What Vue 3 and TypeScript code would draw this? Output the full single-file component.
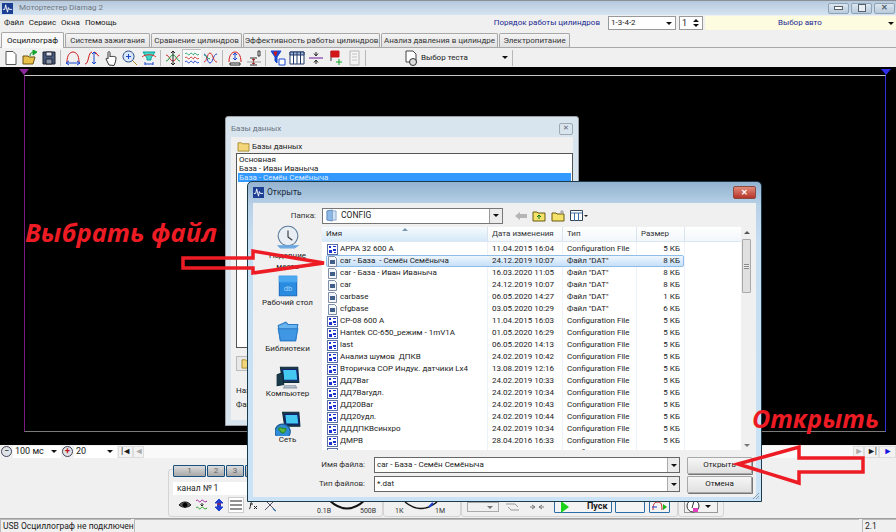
<template>
  <div class="app">
    <header class="titlebar">
      <svg class="app-ico" viewBox="0 0 12 12"><rect width="12" height="12" fill="#1c3f94" /><path d="M1 7h2l1-5 2 8 1-5 1 2h3" fill="none" stroke="#fff" /></svg>
      <span class="title-text">Мотортестер Diamag 2</span>
      <div class="winbtns">
        <span class="winbtn"><i class="w-min"></i></span>
        <span class="winbtn"><i class="w-max"></i></span>
        <span class="winbtn"><b>✕</b></span>
      </div>
    </header>

    <div class="menubar">
      <span v-for="m in menus" :key="m">{{ m }}</span>
      <span class="cyl-label">Порядок работы цилиндров</span>
      <div class="combo cyl-combo"><span>1-3-4-2</span><i class="arr"></i></div>
      <div class="combo spin"><span>1</span><em><i class="up"></i><i class="arr"></i></em></div>
      <div class="auto"><span>Выбор авто</span><i class="arr"></i></div>
    </div>

    <div class="tabs">
      <div v-for="(t, i) in tabs" :key="t.name" class="tab" :class="{ active: i === 0 }" :style="{ width: t.w + 'px' }">{{ t.name }}</div>
    </div>

    <div class="toolbar">
      <template v-for="(g, gi) in toolGroups" :key="gi">
        <span v-for="(ic, i) in g" :key="i" class="tool" :class="{ pressed: ic.on }">
          <svg viewBox="0 0 16 16" width="16" height="16">
            <path v-for="(p, k) in ic.p" :key="k" :d="p[0]" :stroke="p[1]" :fill="p[2] || 'none'" />
          </svg>
        </span>
        <i class="sep"></i>
      </template>
      <div class="test-select">
        <svg viewBox="0 0 16 16" width="16" height="16"><path d="M3 1h7l3 3v8H3z" fill="#fff" stroke="#444" /><circle cx="10" cy="12" r="3.500" fill="#ddd" stroke="#333" /></svg>
        <span>Выбор теста</span>
        <i class="arr"></i>
      </div>
      <i class="sep"></i>
    </div>

    <div class="scope">
      <div class="plot">
        <i class="mark mark-l"></i>
        <i class="mark mark-r"></i>
      </div>
    </div>

    <div class="timebar">
      <span class="round">−</span>
      <div class="sel w48"><span>100 мс</span><i class="arr"></i></div>
      <span class="round red">+</span>
      <div class="sel w42"><span>20</span><i class="arr"></i></div>
      <span class="nav">|◄</span>
      <span class="nav off">◄</span>
      <div class="track"></div>
      <span class="nav off">►</span>
      <span class="nav">►|</span>
      <span class="nav blue">►</span>
    </div>

    <div class="panel">
      <div class="group ch-group">
        <div class="ch-col">
          <div class="ch-tabs">
            <span class="ch-tab first">1</span><span class="ch-tab">2</span><span class="ch-tab">3</span><span class="ch-tab">4</span>
          </div>
          <div class="ch-input">канал № 1</div>
          <div class="ch-icons">
            <svg v-for="(ic, i) in chIcons" :key="i" viewBox="0 0 14 14" width="14" height="14" :class="{ boxed: i === 3 }">
              <path v-for="(p, k) in ic" :key="k" :d="p[0]" :stroke="p[1]" :fill="p[2] || 'none'" />
            </svg>
          </div>
        </div>
        <svg class="dial d-volt" viewBox="0 0 62 16" width="62" height="16">
          <path d="M12 1Q30 18 48 1" fill="none" stroke="#111" stroke-width="2" />
          <text x="0" y="14">0.1В</text><text x="43" y="14">500В</text>
        </svg>
      </div>
      <div class="group dial-group">
        <svg class="dial" viewBox="0 0 58 16" width="58" height="16">
          <path d="M12 3Q28 16 44 3" fill="none" stroke="#111" stroke-width="1.500" />
          <path d="M36 8l4-4" stroke="#1a3fd0" stroke-width="2" />
          <text x="2" y="14">1К</text><text x="42" y="14">1М</text>
        </svg>
      </div>
      <div class="group ctl-group">
        <div class="mini-combo"><i class="arr gray"></i></div>
        <svg viewBox="0 0 16 12" width="16" height="12" class="ctl-ico"><path d="M1 3h9l3 3M14 9H6L3 6" fill="none" stroke="#999" /></svg>
        <svg viewBox="0 0 16 12" width="16" height="12" class="ctl-ico"><path d="M1 6h5M3 4l3 2-3 2M15 6h-5M13 4l-3 2 3 2" fill="none" stroke="#777" /></svg>
        <div class="btn-blue start">
          <svg viewBox="0 0 10 12" width="10" height="12"><path d="M1 0l8 6-8 6z" fill="#19d219" /></svg>
          <b>Пуск</b>
        </div>
        <div class="btn-blue blank"></div>
        <div class="btn-blue small">
          <svg viewBox="0 0 18 12" width="18" height="12"><path d="M3 9C3 2 5 1 8 1s4 2 4 8" fill="none" stroke="#c22" /><path d="M2 6h5" stroke="#1a3fd0" /><path d="M13 3l4 3-4 3z" fill="#19b219" /></svg>
        </div>
      </div>
      <div class="group last-group">
        <div class="btn-gray">
          <svg viewBox="0 0 16 13" width="16" height="13"><circle cx="7" cy="6" r="6" fill="#fff" stroke="#333" /><path d="M8 1L6 8" stroke="#333" /><path d="M7 8h5v4H7z" fill="#e040c0" /></svg>
          <i class="arr"></i>
        </div>
      </div>
    </div>

    <footer class="status">
      <div class="st st-a">USB Осциллограф не подключен</div>
      <div class="st st-b"></div>
      <div class="st st-c">2.1</div>
    </footer>

    <!-- base list window, behind the file dialog -->
    <section class="win-db">
      <div class="db-title"><span>Базы данных</span><i class="db-close">✕</i></div>
      <div class="db-body">
        <div class="db-head">
          <svg viewBox="0 0 14 12" width="13" height="11"><path d="M1 2h4l1 1h7v8H1z" fill="#f3d67a" stroke="#a88a30" /></svg>
          <span>Базы данных</span>
        </div>
        <div class="db-list">
          <div>Основная</div>
          <div>База - Иван Иваныча</div>
          <div class="sel-row">База - Семён Семёныча</div>
        </div>
        <div class="db-btn"><svg viewBox="0 0 14 12" width="13" height="11"><path d="M1 2h4l1 1h7v8H1z" fill="#f3d67a" stroke="#a88a30" /></svg></div>
        <div class="db-note first">Название</div>
        <div class="db-note">Файл</div>
      </div>
    </section>

    <!-- file open dialog -->
    <section class="win-open">
      <div class="open-title">
        <svg viewBox="0 0 12 12" width="11" height="11"><rect width="12" height="12" fill="#1c3f94" /><path d="M1 7h2l1-5 2 8 1-5 1 2h3" fill="none" stroke="#fff" /></svg>
        <span>Открыть</span>
        <i class="open-close">✕</i>
      </div>
      <div class="open-body">
        <div class="folder-row">
          <label>Папка:</label>
          <div class="folder-combo">
            <svg viewBox="0 0 12 14" width="11" height="13"><path d="M1 2l6-1v12l-6-1z" fill="#8db8e8" stroke="#5b86b8" /><path d="M7 2h4v10H7z" fill="#cfe2f5" stroke="#8aa8c8" /></svg>
            <span>CONFIG</span>
            <em><i class="arr"></i></em>
          </div>
          <div class="nav-icons">
            <svg viewBox="0 0 12 10" width="12" height="10"><path d="M0 5l5-4v2h7v4H5v2z" fill="#b5b5b5" /></svg>
            <svg viewBox="0 0 14 12" width="14" height="12"><path d="M1 2h4l1 1h7v8H1z" fill="#f4e26a" stroke="#6b5a10" /><path d="M7 9V5M5 7l2-2 2 2" stroke="#0a7a20" fill="none" /></svg>
            <svg viewBox="0 0 14 12" width="14" height="12"><path d="M1 3h4l1 1h7v7H1z" fill="#f4e26a" stroke="#6b5a10" /><path d="M11 0v4M9 2h4" stroke="#999" /></svg>
            <svg viewBox="0 0 18 12" width="18" height="12"><path d="M.5.5h12v10H.5z" fill="#fff" stroke="#345" /><path d="M.5 3h12M4.500 3v8M8.500 3v8" stroke="#3a6ea8" /><path d="M14 5h4l-2 2z" fill="#222" /></svg>
          </div>
        </div>

        <div class="main">
          <aside class="places">
            <div v-for="pl in places" :key="pl.name" class="place" :class="pl.cls">
              <svg viewBox="0 0 24 24" width="26" height="26">
                <path v-for="(p, k) in pl.p" :key="k" :d="p[0]" :stroke="p[1]" :fill="p[2] || 'none'" />
                <text v-if="pl.txt" x="8" y="17">{{ pl.txt }}</text>
              </svg>
              <span>{{ pl.name }}</span>
            </div>
          </aside>

          <div class="list">
            <div class="list-cols">
              <div class="head">
                <span class="h-name">Имя<i class="sort"></i></span>
                <span class="h-date">Дата изменения</span>
                <span class="h-type">Тип</span>
                <span class="h-size">Размер</span>
              </div>
              <div class="rows">
                <div v-for="(f, i) in files" :key="i" class="row" :class="{ picked: i === 1 }">
                  <span class="r-name">
                    <svg v-if="f.dat" viewBox="0 0 11 11" width="11" height="11"><path d="M1.500.5h6l2 2v8h-8z" fill="#f2f5fa" stroke="#7f8ea3" /><path d="M3 4h5v4H3z" fill="#3f5f88" /></svg>
                    <svg v-else viewBox="0 0 11 11" width="11" height="11"><rect x=".5" y=".5" width="10" height="10" fill="#fff" stroke="#5a6fa8" /><path d="M2 2h2v2H2zM6 2h3v1H6zM2 6h3v3H2zM6 5h3v2H6zM7 8h2v1H7z" fill="#1c2fd0" /></svg>
                    <span>{{ f.name }}</span>
                  </span>
                  <span class="r-date">{{ f.date }}</span>
                  <span class="r-type">{{ f.dat ? 'Файл "DAT"' : 'Configuration File' }}</span>
                  <span class="r-size">{{ f.size }} КБ</span>
                </div>
              </div>
            </div>
            <div class="vscroll">
              <i class="arr up-g"></i>
              <div class="thumb"><i></i></div>
              <i class="arr gray"></i>
            </div>
          </div>
        </div>

        <div class="open-foot">
          <label>Имя файла:</label>
          <div class="field"><span>car - База  - Семён Семёныча</span><em><i class="arr"></i></em></div>
          <div class="push default">Открыть</div>
          <label>Тип файлов:</label>
          <div class="field"><span>*.dat</span><em><i class="arr"></i></em></div>
          <div class="push">Отмена</div>
        </div>
      </div>
      <svg class="grip" viewBox="0 0 8 8" width="8" height="8"><path d="M7 1L1 7M7 4L4 7M7 6.500L6.500 7" stroke="#8a9aa8" fill="none" /></svg>
    </section>

    <!-- red annotations drawn on top of the screenshot -->
    <svg class="arrows" viewBox="0 0 896 532" width="896" height="532">
      <path d="M183 258H253V251L324 263 253 273V268H183Z" />
      <path d="M738 464L799 447V458H863V472H799V483Z" />
    </svg>
    <div class="note note-file">Выбрать файл</div>
    <div class="note note-open">Открыть</div>
  </div>
</template>

<script setup lang="ts">
type Shape = [string, string, string?]
interface ToolIcon { p: Shape[]; on?: boolean }

const menus = ['Файл', 'Сервис', 'Окна', 'Помощь']

const tabs = [
  { name: 'Осциллограф', w: 63 },
  { name: 'Система зажигания', w: 85 },
  { name: 'Сравнение цилиндров', w: 91 },
  { name: 'Эффективность работы цилиндров', w: 137 },
  { name: 'Анализ давления в цилиндре', w: 117 },
  { name: 'Электропитание', w: 71 }
]

const toolGroups: ToolIcon[][] = [
  [
    { p: [['M3 1.500h7l3 3v10H3z', '#555', '#fff']] },
    { p: [['M1 6h5l1 1h6l-2 7H1z', '#6b5210', '#e9c04a'], ['M8 6c0-3 2-4 4-4', '#0a8a20'], ['M11 0l4 2-4 3z', '#12a52a', '#12a52a']] },
    { p: [['M2 2h12v12H2z', '#223', '#47597a'], ['M5 2h6v4H5z', '#223', '#dfe5ee'], ['M5 9h6v5H5z', '#223', '#8d99ad']] }
  ],
  [
    { p: [['M2 12C2 5 5 2 8 2s6 3 6 10', '#d01818'], ['M1 13h14M1 13l3-2M1 13l3 2M15 13l-3-2M15 13l-3 2', '#1848d0']] },
    { p: [['M1 14C5 14 4 2 8 2', '#d01818'], ['M10 2c3 0 3 4 5 4', '#d01818'], ['M10 2v12M8 4l2-2 2 2M8 12l2 2 2-2', '#1848d0']] },
    { p: [['M6 15L3 9c0-1 1-1 2 0V3c0-2 2-2 2 0v4c0-1 2-1 2 0 0-1 2-1 2 0 0-.5 2-.5 2 .5 0 3-1 6-2 8z', '#333', '#fff']] },
    { p: [['M10 10l5 5', '#b08a20'], ['M6.500 1a5.500 5.500 0 1 0 .01 0z', '#2a4a80', '#d8e6f8'], ['M4 6.500h5M6.500 4v5', '#1848d0']] },
    { p: [['M2 2h12l-4 6v2H6V8z', '#08a0a0', '#40d8c8'], ['M1 7c3-3 11-3 14 0', '#e03030'], ['M4 14h8M4 12v3M12 12v3', '#1848d0']] }
  ],
  [
    { p: [['M1 5c3 0 4 6 7 6s4-6 7-6', '#d03030'], ['M1 11c3 0 4-6 7-6s4 6 7 6', '#20a040'], ['M8 1v14M6 3l2-2 2 2M6 13l2 2 2-2', '#222']] },
    { on: true, p: [['M1 4c2-3 3 3 5 0s3 3 4 0 3 3 5 0', '#20a060'], ['M1 8c2-3 3 3 5 0s3 3 4 0 3 3 5 0', '#d03030'], ['M1 12c2-3 3 3 5 0s3 3 4 0 3 3 5 0', '#2040d0']] },
    { p: [['M1 4c3 0 3 9 6 9s3-9 7-9', '#2040d0'], ['M1 12c3 0 3-9 6-9s3 9 7 9', '#d03030'], ['M1 5c3 0 3 4 6 4', '#20a060']] }
  ],
  [
    { p: [['M2 12C2 5 5 2 8 2s6 3 6 10', '#d01818'], ['M8 3v7M6 5l2-2 2 2M6 8l2 2 2-2', '#1848d0'], ['M3 13h10v2H3z', '#222', '#fff']] },
    { p: [['M4 8h7M4 15h7', '#333'], ['M7.500 9v5M6 10l1.500-1 1.500 1M6 13l1.500 1 1.500-1', '#a02020'], ['M12 1h2v5h-2z', '#333'], ['M1 12h14', '#999']] }
  ],
  [
    { p: [['M1 1h10L7 7v6L5 11V7z', '#1848d0', '#1848d0'], ['M4 2h3L5.500 6z', '#d01818', '#d01818'], ['M9 9h6v6H9z', '#1848d0', '#fff']] },
    { p: [['M1 2h14v12H1z', '#223a6a', '#fff'], ['M1 2h14v3H1z', '#223a6a', '#9db2d4'], ['M4.500 2v12M8 2v12M11.500 2v12', '#223a6a']] },
    { p: [['M1 8h14', '#6a1a9a'], ['M8 2v3M6 3.500L8 6l2-2.500M8 14v-3M6 12.500L8 10l2 2.500', '#222']] },
    { p: [['M4 1v10', '#333'], ['M4 1h8v6H4z', '#d01818', '#d01818'], ['M9 12h6M12 9v6', '#12a52a']] },
    { p: [['M4 1h9v14H4z', '#b5b5b5', '#f4f4f4'], ['M6 4h5M6 7h5M6 10h5', '#c4c4c4']] }
  ]
]

const chIcons: Shape[][] = [
  [['M1 7c3-4 9-4 12 0-3 3-9 3-12 0z', '#222', '#555'], ['M7 5a2 2 0 1 0 .01 0z', '#000', '#000']],
  [['M1 3c2-3 3 3 5 0s3 3 6 0', '#a020a0'], ['M1 10c2-3 3 3 5 0s3 3 6 0', '#20a020'], ['M7 5v3M5.500 6.500L7 8l1.500-1.500', '#222']],
  [['M7 1L3 5h2.500v4H3l4 4 4-4H8.500V5H11z', '#2040d0', '#2040d0'], ['M5 6h4', '#d01818']],
  [['M1 3h12M1 7h12', '#222'], ['M1 11h12', '#222']],
  [['M3 11c2 0 1-8 4-8M4 6h3M8 8l3 3M11 8l-3 3', '#222']],
  [['M2 2l10 10M12 2L2 12', '#556', ''], ['M1 1l3 1-2 2zM10 10l3 3-2-1z', '#3a6ea8', '#3a6ea8']]
]

const places = [
  { name: 'Недавние места', cls: 'pl-recent', txt: '', p: [
    ['M12 2a9 9 0 1 0 .01 0z', '#5a7a9a', '#e8eef4'], ['M12 6v6l4 3', '#333'], ['M3 20h18l-3 2H5z', '#6ba6e0', '#6ba6e0']
  ] as Shape[] },
  { name: 'Рабочий стол', cls: 'pl-desk', txt: 'db', p: [
    ['M4 3h16v18H4z', '#1a6cc0', '#2a8ce0'], ['M4 3h16v5H4z', '#4aa8f0', '#4aa8f0']
  ] as Shape[] },
  { name: 'Библиотеки', cls: 'pl-lib', txt: '', p: [
    ['M3 6l7-3 2 2h9l-2 15H5z', '#2a7ac8', '#69b4ee'], ['M3 9h18l-2 11H5z', '#2a7ac8', '#3f97e4']
  ] as Shape[] },
  { name: 'Компьютер', cls: 'pl-comp', txt: '', p: [
    ['M5 3h16l1 14H7z', '#0c2a3a', '#1a3a4a'], ['M7 5h13l1 10H8z', '#127', '#45c8f0'], ['M2 10l5-2 1 11-6 1z', '#0c2a3a', '#1a3a4a'], ['M9 20h10l1 2H8z', '#8a98a8', '#c8d0d8']
  ] as Shape[] },
  { name: 'Сеть', cls: 'pl-net', txt: '', p: [
    ['M7 2h15l1 13H9z', '#0c2a3a', '#1a3a4a'], ['M9 4h12l1 9H10z', '#127', '#45c8f0'], ['M7 13a7 7 0 1 0 .01 0z', '#1a5a90', '#2f8ad8'], ['M3 17c3-2 4 1 6 0s1 3-1 4-3-1-5-4z', '#2a8a30', '#58b840']
  ] as Shape[] }
]

const cfg = (name: string, date: string, size = 5) => ({ name, date, size, dat: false })
const dat = (name: string, date: string, size: number) => ({ name, date, size, dat: true })

const files = [
  cfg('APPA 32 600 A', '11.04.2015 16:04'),
  dat('car - База  - Семён Семёныча', '24.12.2019 10:07', 8),
  dat('car - База - Иван Иваныча', '16.03.2020 11:05', 8),
  dat('car', '24.12.2019 10:07', 8),
  dat('carbase', '06.05.2020 14:27', 1),
  dat('cfgbase', '03.05.2020 10:29', 6),
  cfg('CP-08 600 A', '11.04.2015 16:03'),
  cfg('Hantek CC-650_режим - 1mV1A', '01.05.2020 16:29'),
  cfg('last', '06.05.2020 14:13'),
  cfg('Анализ шумов  ДПКВ', '24.02.2019 10:42'),
  cfg('Вторичка СОР Индук. датчики Lx4', '13.08.2019 12:16'),
  cfg('ДД7Bar', '24.02.2019 10:33'),
  cfg('ДД7Barудл.', '24.02.2019 10:34'),
  cfg('ДД20Bar', '24.02.2019 10:43'),
  cfg('ДД20удл.', '24.02.2019 10:44'),
  cfg('ДДДПКВсинхро', '24.02.2019 10:34'),
  cfg('ДМРВ', '28.04.2016 16:33'),
  cfg('ДМРВ2', '18.04.2016 15:18')
]
</script>

<style>
html, body { margin: 0; padding: 0; background: #f0f0f0; }
</style>

<style scoped>
.app {
  position: relative;
  width: 896px;
  height: 532px;
  overflow: hidden;
  display: flex;
  flex-direction: column;
  background: #f0f0f0;
  color: #1a1a1a;
  font: 8px/1 Roboto, "Liberation Sans", Arial, sans-serif;
}
i, em, b { font-style: normal; }
svg { display: block; flex: none; }

/* common little dropdown arrow */
.arr { display: block; width: 0; height: 0; border: 3px solid transparent; border-top: 3px solid #111; border-bottom: 0; }
.arr.gray { border-top-color: #777; }
.up { display: block; width: 0; height: 0; border: 3px solid transparent; border-bottom: 3px solid #111; border-top: 0; }

.titlebar { flex: none; height: 15px; box-sizing: border-box; display: flex; align-items: center; padding-left: 2px; border-top: 1px solid #8a8f96; background: linear-gradient(#b6c9dc, #d5e4f1); }
.app-ico { width: 11px; height: 11px; }
.title-text { margin-left: 6px; font-size: 8px; color: #6f7680; }
.winbtns { margin-left: auto; margin-right: 1px; display: flex; gap: 2px; }
.winbtn { width: 21px; height: 11px; box-sizing: border-box; border: 1px solid #8fa3b6; border-radius: 2px; background: linear-gradient(#dbe6f0, #b9cbdc); display: flex; align-items: center; justify-content: center; color: #55626e; font-size: 8px; }
.w-min { width: 7px; height: 2px; border: 1px solid #55626e; background: #fff; }
.w-max { width: 6px; height: 6px; border: 1px solid #55626e; background: #e8eef4; }

.menubar { flex: none; height: 16px; display: flex; align-items: center; padding-left: 4px; gap: 5px; white-space: nowrap; }
.cyl-label { margin-left: auto; margin-right: 3px; color: #1a2a90; }
.combo { height: 14px; box-sizing: border-box; border: 1px solid #999; background: #fff; display: flex; align-items: center; padding: 0 3px 0 2px; justify-content: space-between; }
.cyl-combo { width: 68px; margin-right: -2px; }
.spin { width: 24px; margin-right: -3px; font-size: 9px; }
.spin em { display: flex; flex-direction: column; gap: 2px; }
.auto { width: 191px; height: 14px; box-sizing: border-box; background: #fdfbe0; border-radius: 2px; display: flex; align-items: center; padding-left: 73px; justify-content: space-between; padding-right: 2px; color: #1a2a90; }

.tabs { flex: none; height: 16px; box-sizing: border-box; display: flex; gap: 1px; align-items: flex-end; padding: 0 0 0 1px; border-bottom: 1px solid #a8a8a8; margin-top: 1px; }
.tab { height: 14px; box-sizing: border-box; border: 1px solid #a8a8a8; border-bottom: 0; border-radius: 2px 2px 0 0; background: linear-gradient(#f4f4f4, #e2e2e2); display: flex; align-items: center; justify-content: center; white-space: nowrap; color: #333; }
.tab.active { height: 16px; background: #f8f8f8; position: relative; margin-bottom: -1px; color: #111; }

.toolbar { flex: none; height: 19px; display: flex; align-items: center; padding-left: 1px; background: #f0f0f0; }
.tool { width: 19px; height: 18px; display: flex; align-items: center; justify-content: center; flex: none; }
.tool.pressed { background: #fafafa; box-shadow: inset 1px 1px 0 #c0c0c0, inset -1px -1px 0 #fff; }
.sep { width: 1px; height: 16px; background: #b8b8b8; margin: 0 2px; flex: none; }
.test-select { width: 142px; box-sizing: border-box; display: flex; align-items: center; padding: 0 2px 0 35px; gap: 2px; white-space: nowrap; flex: none; }
.test-select .arr { margin-left: auto; }

.scope { flex: 1; min-height: 0; background: #000; padding: 8px 10px 13px 24px; display: flex; box-sizing: border-box; }
.plot { flex: 1; position: relative; box-sizing: border-box; border-top: 1px solid #c8c8c8; border-bottom: 1px solid #7a7a7a; border-left: 1px solid #7a1a80; border-right: 1px solid #3030d8; }
.mark { position: absolute; top: -7px; width: 0; height: 0; border: 5px solid transparent; border-bottom: 0; border-top-width: 6px; }
.mark-l { left: -6px; border-top-color: #8a2a9a; }
.mark-r { right: -6px; border-top-color: #3030e8; }

.timebar { flex: none; height: 13px; display: flex; align-items: center; padding: 0 0 0 1px; gap: 0; }
.round { width: 11px; height: 11px; box-sizing: border-box; border: 1px solid #445; border-radius: 50%; display: flex; align-items: center; justify-content: center; font-size: 9px; background: #dfe3ea; margin-right: 1px; }
.round.red { color: #c01818; font-weight: bold; margin-left: 1px; }
.sel { background: #fff; height: 12px; display: flex; align-items: center; justify-content: space-between; padding: 0 4px 0 2px; box-sizing: border-box; font-size: 9px; white-space: nowrap; }
.w48 { width: 48px; }
.w42 { width: 43px; margin-right: 1px; }
.nav { width: 15px; height: 12px; box-sizing: border-box; border: 1px solid #ddd; background: #f2f2f2; display: flex; align-items: center; justify-content: center; font-size: 9px; letter-spacing: -1px; }
.nav.off { color: #aaa; width: 11px; }
.nav.blue { color: #1818e0; width: 17px; }
.track { flex: 1; height: 12px; background: #f9f9f9; }

.panel { flex: none; height: 61px; box-sizing: border-box; display: flex; padding-left: 168px; border-bottom: 1px solid #a0a0a0; padding-bottom: 1px; }
.group { box-sizing: border-box; margin-top: 11px; border: 1px solid #d4d4d4; border-radius: 3px; display: flex; align-items: flex-end; position: relative; }
.ch-group { width: 215px; }
.ch-col { width: 120px; padding-left: 4px; margin-top: -5px; align-self: flex-start; }
.ch-tabs { display: flex; gap: 1px; }
.ch-tab { width: 18px; height: 12px; box-sizing: border-box; border: 1px solid #1a5080; border-radius: 1px; background: linear-gradient(#dcdcdc, #a8a8a8); color: #666; display: flex; align-items: center; justify-content: center; }
.ch-tab.first { width: 33px; }
.ch-input { margin-top: 5px; height: 13px; background: #fff; width: 120px; padding-left: 4px; display: flex; align-items: center; font-size: 8.5px; }
.ch-icons { display: flex; gap: 3px; margin-top: 3px; padding-left: 5px; }
.boxed { background: #fff; box-shadow: 0 0 0 1px #ccc; }
.dial { margin-bottom: 1px; }
.dial text { font: 7px Roboto, "Liberation Sans", Arial, sans-serif; fill: #333; }
.d-volt { margin-left: auto; margin-right: 3px; }
.dial-group { width: 78px; justify-content: center; }
.ctl-group { width: 217px; padding: 0 0 3px 5px; gap: 3px; }
.mini-combo { width: 32px; height: 10px; box-sizing: border-box; border: 1px solid #aaa; display: flex; align-items: center; justify-content: flex-end; padding-right: 5px; margin-bottom: 1px; }
.ctl-ico { margin: 0 2px 0 3px; }
.btn-blue { height: 13px; box-sizing: border-box; border: 1px solid #2a6ea8; border-radius: 1px; background: #f4f4f4; display: flex; align-items: center; }
.start { width: 58px; margin-left: 4px; padding-left: 5px; }
.start b { margin-left: 17px; font-size: 9px; }
.blank { width: 30px; }
.small { width: 21px; margin-left: 1px; }
.last-group { width: 46px; padding: 0 0 3px 5px; }
.btn-gray { width: 34px; height: 13px; box-sizing: border-box; border: 1px solid #999; background: #f2f2f2; display: flex; align-items: center; gap: 3px; padding-left: 1px; }

.status { flex: none; height: 13px; display: flex; gap: 3px; font-size: 8.5px; white-space: nowrap; }
.st { box-sizing: border-box; height: 13px; border-top: 1px solid #bbb; border-left: 1px solid #bbb; padding-left: 2px; display: flex; align-items: center; background: #f0f0f0; }
.st-a { width: 131px; }
.st-b { flex: 1; }
.st-c { width: 34px; }

/* windows float over the main window */
.win-db { position: absolute; left: 225px; top: 116px; width: 354px; height: 310px; box-sizing: border-box; border: 1px solid #9aa0a6; border-radius: 3px 3px 0 0; background: #d8e4ee; padding: 0 5px 5px; display: flex; flex-direction: column; }
.db-title { height: 17px; display: flex; align-items: center; justify-content: space-between; color: #6a7480; padding-top: 3px; flex: none; }
.db-close { width: 12px; height: 10px; border: 1px solid #a0a8b0; border-radius: 2px; font-size: 7px; color: #667; display: flex; align-items: center; justify-content: center; }
.db-body { flex: 1; background: #f0f0f0; padding: 3px 5px 0; }
.db-head { height: 13px; display: flex; align-items: center; gap: 2px; padding-left: 1px; }
.db-list { height: 195px; box-sizing: border-box; border: 1px solid #555; background: #fff; line-height: 9px; padding: 1px; width: 337px; }
.db-list div { height: 9px; padding-left: 1px; white-space: nowrap; }
.db-list .sel-row { background: #3399ff; color: #dbeaff; }
.db-btn { margin-top: 8px; width: 20px; height: 13px; border: 1px solid #bbb; background: #e8e8e8; display: flex; align-items: center; justify-content: center; }
.db-note { margin-top: 6px; line-height: 8px; white-space: nowrap; overflow: hidden; width: 11px; }
.db-note.first { margin-top: 16px; }

.win-open { position: absolute; left: 247px; top: 181px; width: 515px; height: 321px; box-sizing: border-box; border: 1px solid #1b3a4b; border-radius: 5px 5px 0 0; background: linear-gradient(#93b3d0 0, #b9d2e8 24px, #c6def2 60px, #cbe3f6 100%); padding: 0 5px 4px; display: flex; flex-direction: column; }
.open-title { flex: none; height: 21px; display: flex; align-items: center; gap: 3px; color: #1a2a3a; box-sizing: border-box; font-size: 8.5px; }
.open-close { margin-left: auto; width: 21px; height: 11px; border: 1px solid #8a4a40; border-radius: 2px; background: linear-gradient(#e08a78, #b8342a); color: #fff; font-size: 8px; font-weight: bold; display: flex; align-items: center; justify-content: center; }
.open-body { flex: 1; min-height: 0; background: #f0f0f0; display: flex; flex-direction: column; }
.folder-row { flex: none; height: 24px; display: flex; align-items: center; padding-top: 1px; box-sizing: border-box; }
.folder-row label { width: 63px; text-align: right; margin-right: 6px; color: #333; }
.folder-combo { width: 181px; height: 16px; box-sizing: border-box; border: 1px solid #777; background: #fff; display: flex; align-items: center; padding-left: 3px; gap: 4px; font-size: 8.5px; }
.folder-combo em { margin-left: auto; width: 12px; height: 14px; border-left: 1px solid #999; background: #ececec; display: flex; align-items: center; justify-content: center; }
.nav-icons { display: flex; align-items: center; gap: 5px; margin-left: 12px; }

.main { flex: 1; min-height: 0; display: flex; }
.places { width: 69px; flex: none; position: relative; height: 100%; }
.place { position: absolute; left: 0; width: 69px; display: flex; flex-direction: column; align-items: center; text-align: center; gap: 0; color: #222; }
.place text { font: 7px Roboto, sans-serif; fill: #9fd0f8; }
.pl-recent { top: -3px; }
.pl-recent span { width: 40px; line-height: 11px; }
.pl-desk { top: 46px; }
.pl-lib { top: 92px; }
.pl-comp { top: 137px; }
.pl-net { top: 183px; }

.list { flex: 1; min-width: 0; background: #fff; display: flex; overflow: hidden; margin-right: 4px; }
.list-cols { flex: 1; min-width: 0; display: flex; flex-direction: column; background: linear-gradient(90deg, transparent 165px, #edf2f9 165px, #edf2f9 166px, transparent 166px, transparent 240px, #edf2f9 240px, #edf2f9 241px, transparent 241px, transparent 314px, #edf2f9 314px, #edf2f9 315px, transparent 315px, transparent 362px, #edf2f9 362px, #edf2f9 363px, transparent 363px); }
.head { flex: none; height: 15px; display: flex; align-items: center; color: #333; background: linear-gradient(#fff, #f2f6fb); border-bottom: 1px solid #dbe7f3; box-sizing: border-box; }
.head span { height: 100%; box-sizing: border-box; display: flex; align-items: center; padding-left: 4px; border-right: 1px solid #dbe3ec; position: relative; white-space: nowrap; }
.h-name { width: 166px; background: linear-gradient(#f6fbfe, #d6e9f8); }
.h-date { width: 75px; }
.h-type { width: 74px; }
.h-size { width: 48px; }
.sort { position: absolute; top: 1px; left: 80px; width: 0; height: 0; border: 3px solid transparent; border-bottom: 3px solid #7a96b0; border-top: 0; }
.rows { flex: 1; overflow: hidden; padding-top: 1px; }
.row { height: 12px; box-sizing: border-box; margin-left: 4px; width: 358px; display: flex; align-items: center; white-space: pre; border: 1px solid transparent; border-radius: 2px; color: #222; }
.row.picked { background: linear-gradient(#eef6fe, #c6e0f8); border-color: #8fbde8; }
.r-name { width: 161px; display: flex; align-items: center; gap: 2px; }
.r-date { width: 75px; padding-left: 4px; box-sizing: border-box; }
.r-type { width: 74px; box-sizing: border-box; padding-left: 4px; }
.r-size { width: 43px; text-align: right; }
.vscroll { width: 11px; flex: none; background: #f0f0f0; display: flex; flex-direction: column; align-items: center; justify-content: space-between; padding: 4px 0 3px; box-sizing: border-box; }
.up-g { border-top: 0; border-bottom: 3px solid #555; }
.thumb { width: 9px; height: 54px; position: absolute; margin-top: 8px; box-sizing: border-box; border: 1px solid #a8a8a8; background: #e0e0e0; border-radius: 1px; display: flex; align-items: center; justify-content: center; }
.thumb i { width: 5px; height: 5px; background: repeating-linear-gradient(#888 0 1px, #eee 1px 2px); }

.open-foot { flex: none; height: 47px; display: grid; grid-template-columns: 121px 306px 65px; column-gap: 0; grid-auto-rows: 16px; row-gap: 3px; padding-top: 7px; box-sizing: border-box; align-items: center; }
.open-foot label { text-align: right; padding-right: 9px; color: #333; white-space: nowrap; }
.field { height: 16px; box-sizing: border-box; border: 1px solid #666; background: #fff; display: flex; align-items: center; padding-left: 2px; white-space: pre; }
.field em { margin-left: auto; width: 11px; height: 14px; border-left: 1px solid #aaa; background: #ececec; display: flex; align-items: center; justify-content: center; }
.push { margin-left: 7px; width: 65px; height: 17px; box-sizing: border-box; border: 1px solid #a8a8a8; border-radius: 1px; background: linear-gradient(#f6f6f6, #e0e0e0); box-shadow: 1px 1px 0 #777; display: flex; align-items: center; justify-content: center; }
.grip { position: absolute; right: 1px; bottom: 1px; }

.arrows { position: absolute; left: 0; top: 0; pointer-events: none; }
.arrows path { fill: none; stroke: #ed1c24; stroke-width: 3.5; }
.note { position: absolute; color: #ed1c24; font-family: "Open Sans", "DejaVu Sans", sans-serif; font-weight: 700; font-style: italic; white-space: nowrap; }
.note-file { left: 25px; top: 218px; font-size: 25.6px; line-height: 30px; }
.note-open { left: 752px; top: 403px; font-size: 25px; line-height: 30px; }
</style>
